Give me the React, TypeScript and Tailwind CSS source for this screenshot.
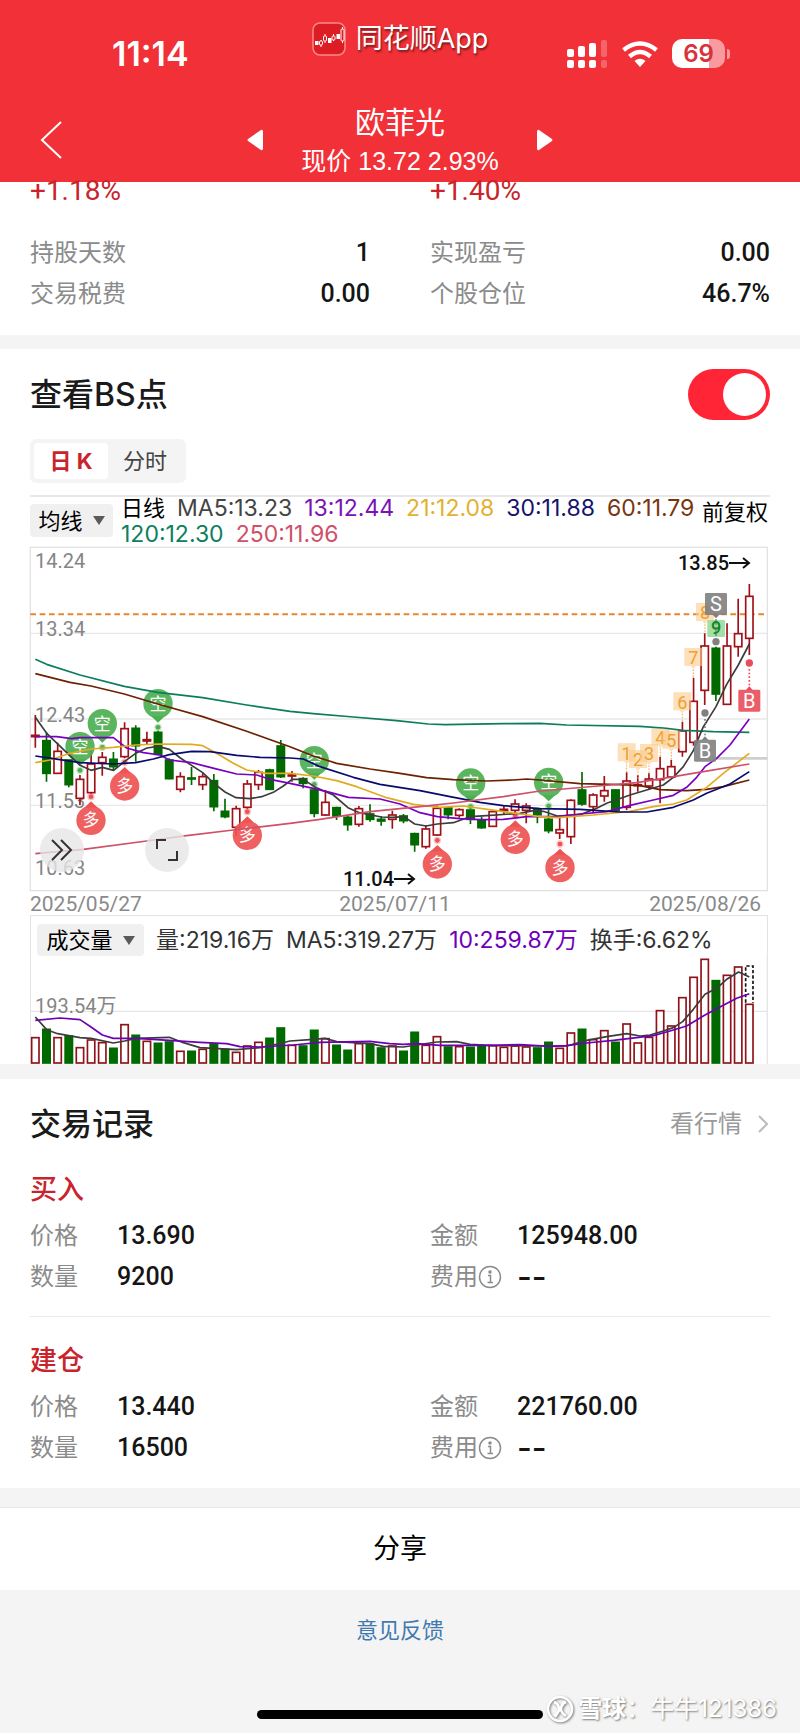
import { useState } from "react";
import clsx from "clsx";

type Candle = [up: 0 | 1, high: number, top: number, bottom: number, low: number, volumeTop: number];
type Point = [x: number, y: number];

// Chart geometry lives on a 3x grid and is scaled down when drawn.
const STEP = 33.47;
const candleX = (i: number) => 46 + STEP * i;

const RED = "#a01018";
const GREEN = "#006a00";

const CANDLES: Candle[] = [
  [1, 525, 586, 590, 623, 409],
  [0, 576, 602, 700, 725, 384],
  [1, 608, 634, 700, 700, 409],
  [0, 660, 660, 734, 742, 404],
  [1, 705, 718, 775, 795, 439],
  [1, 632, 672, 758, 762, 416],
  [1, 636, 652, 668, 707, 424],
  [0, 636, 658, 680, 690, 441],
  [1, 547, 566, 650, 655, 370],
  [0, 556, 565, 617, 665, 402],
  [1, 575, 599, 603, 612, 420],
  [0, 572, 577, 643, 646, 426],
  [0, 655, 660, 716, 718, 422],
  [1, 697, 710, 748, 757, 450],
  [0, 681, 714, 717, 735, 450],
  [1, 700, 710, 734, 750, 444],
  [0, 702, 722, 800, 814, 428],
  [0, 776, 814, 830, 835, 444],
  [1, 797, 806, 862, 888, 453],
  [1, 720, 732, 802, 806, 434],
  [1, 690, 697, 734, 750, 423],
  [0, 686, 690, 748, 750, 411],
  [0, 600, 618, 710, 714, 380],
  [1, 693, 705, 708, 725, 432],
  [0, 712, 716, 730, 745, 434],
  [0, 745, 750, 820, 832, 387],
  [1, 750, 787, 825, 828, 412],
  [0, 800, 803, 828, 840, 432],
  [0, 828, 832, 854, 872, 447],
  [1, 798, 806, 853, 860, 427],
  [0, 793, 822, 838, 845, 428],
  [0, 828, 838, 843, 857, 440],
  [1, 812, 825, 838, 866, 434],
  [0, 822, 828, 842, 850, 450],
  [0, 878, 881, 914, 935, 393],
  [1, 855, 867, 920, 926, 432],
  [1, 797, 805, 885, 888, 406],
  [0, 800, 804, 824, 838, 437],
  [1, 805, 809, 826, 833, 436],
  [0, 805, 810, 838, 852, 438],
  [0, 830, 842, 863, 866, 434],
  [1, 810, 815, 859, 861, 433],
  [1, 795, 808, 812, 825, 438],
  [1, 778, 792, 811, 818, 434],
  [1, 790, 798, 811, 850, 437],
  [0, 803, 808, 824, 850, 440],
  [0, 810, 838, 872, 880, 423],
  [1, 832, 869, 879, 897, 441],
  [1, 778, 781, 890, 912, 395],
  [0, 696, 750, 792, 797, 384],
  [1, 760, 765, 800, 820, 415],
  [1, 708, 752, 768, 785, 388],
  [0, 748, 750, 811, 815, 423],
  [1, 697, 723, 802, 810, 368],
  [1, 705, 734, 737, 755, 425],
  [1, 700, 717, 738, 748, 408],
  [1, 650, 686, 719, 790, 328],
  [1, 660, 680, 711, 713, 374],
  [1, 545, 573, 635, 650, 289],
  [1, 413, 484, 607, 617, 228],
  [1, 280, 318, 451, 495, 174],
  [0, 320, 325, 462, 483, 238],
  [1, 250, 318, 493, 495, 222],
  [1, 176, 281, 320, 350, 197],
  [1, 132, 169, 295, 345, 309],
];

const AVERAGES = [
  {
    color: "#0b7d5e",
    points:
      "46,358 80,373 180,405 313,439 413,457 548,473 680,495 810,514 880,521 1000,531 1130,542 1225,552 1275,554 1450,551 1560,550 1640,555 1860,559 1930,564 1990,571 2080,575 2188,577",
  },
  {
    color: "#6e2000",
    points:
      "46,401 150,427 213,438 313,462 413,492 548,530 680,574 810,620 880,648 950,670 1050,687 1140,700 1220,713 1300,719 1400,723 1480,720 1520,717 1560,720 1680,731 1800,734 1860,737 1920,749 2000,752 2060,748 2110,740 2188,720",
  },
  {
    color: "#3c3c3c",
    points:
      "46,532 80,580 130,628 180,676 213,691 247,682 281,691 313,665 347,640 381,624 414,619 448,628 481,654 548,698 582,730 615,756 648,773 690,776 725,770 760,757 790,738 816,718 850,718 883,740 917,755 940,765 984,803 1018,818 1084,831 1118,832 1152,830 1184,852 1218,858 1252,852 1300,848 1350,830 1400,827 1500,820 1540,812 1570,814 1612,828 1680,824 1730,805 1760,790 1830,765 1890,747 1930,735 1960,712 1990,680 2020,632 2050,560 2060,545 2088,500 2120,433 2155,375 2188,312",
  },
  {
    color: "#7a00c0",
    points:
      "46,590 110,590 155,596 180,593 280,593 320,624 370,638 420,645 448,660 515,668 582,685 650,702 710,705 750,718 810,730 880,745 930,757 985,772 1080,777 1140,792 1200,818 1252,830 1320,836 1380,839 1450,838 1520,830 1612,830 1680,822 1760,815 1830,796 1900,780 1960,766 2000,742 2030,712 2055,680 2090,655 2130,615 2188,537",
  },
  {
    color: "#e2ab1f",
    points:
      "46,668 90,660 150,640 213,627 280,622 347,615 414,612 515,613 548,617 590,640 640,670 680,690 740,700 810,700 880,708 950,722 1010,740 1100,773 1180,793 1260,802 1330,798 1430,812 1500,822 1560,830 1612,833 1720,825 1830,814 1900,800 1960,792 2000,780 2060,742 2110,700 2188,640",
  },
  {
    color: "#0a0a6e",
    points:
      "46,648 100,656 180,668 280,672 347,668 400,657 448,644 515,634 570,635 650,646 720,652 810,654 850,657 900,680 1000,712 1080,733 1200,752 1290,770 1380,787 1450,797 1560,806 1680,808 1800,816 1880,816 1960,802 2020,780 2060,760 2130,732 2188,695",
  },
  {
    color: "#cf5069",
    points:
      "46,941 190,928 380,903 500,887 640,870 810,850 900,838 1050,815 1200,800 1300,789 1450,770 1560,753 1700,741 1850,728 1930,715 2050,695 2188,672",
  },
];

const VOLUME_AVERAGES = [
  {
    color: "#3c3c3c",
    points:
      "46,348 80,386 113,398 180,410 213,412 280,426 314,420 347,412 448,409 490,425 540,440 650,446 720,440 760,432 810,420 880,415 915,412 950,422 1050,428 1090,436 1150,438 1190,432 1250,423 1310,422 1350,430 1420,434 1600,435 1640,435 1700,418 1760,407 1820,398 1860,405 1890,402 1930,390 1960,380 1988,362 2020,325 2055,280 2090,262 2120,235 2156,213 2188,228",
  },
  {
    color: "#6e00b4",
    points:
      "46,358 120,351 180,356 213,378 247,402 280,412 347,412 448,418 540,424 620,428 660,437 720,438 820,432 900,424 1050,421 1110,428 1150,430 1190,428 1260,433 1400,433 1500,431 1590,436 1640,434 1700,426 1780,418 1850,410 1900,404 1950,390 2000,375 2055,342 2100,318 2150,292 2188,278",
  },
];

const SHORT_PINS: Point[] = [[180, 620], [247, 551], [414, 491], [883, 662], [1352, 729], [1586, 727]];
const LONG_PINS: Point[] = [[213, 841], [314, 738], [682, 886], [1252, 972], [1486, 898], [1620, 983]];

const COUNT_TAGS: Point[] = [
  [1820, 638], [1854, 658], [1887, 640], [1921, 590], [1954, 600], [1987, 485], [2020, 352], [2055, 217],
];

const PRICE_LABELS = [
  { text: "14.24", y: 21 },
  { text: "13.34", y: 89 },
  { text: "12.43", y: 175 },
  { text: "11.53", y: 261 },
  { text: "10.63", y: 328 },
];

const SCALE = "translate(-10 -7) scale(0.33333)";
const toX = (x: number) => x / 3 - 10;
const toY = (y: number) => y / 3 - 7;

const TrendPin = ({ at: [x, y], kind }: { at: Point; kind: "空" | "多" }) => {
  const down = kind === "空" ? 1 : -1;
  const color = kind === "空" ? "#4caf50" : "#ee5253";
  return (
    <g>
      <g transform={SCALE} fill={color}>
        <circle cx={x} cy={y} r={44} opacity={0.92} />
        <path d={`M${x - 20} ${y + 38 * down}L${x} ${y + 57 * down}L${x + 20} ${y + 38 * down}Z`} />
        <circle cx={x} cy={y + 71 * down} r={11} opacity={0.35} />
        <circle cx={x} cy={y + 71 * down} r={7} />
      </g>
      <text x={toX(x)} y={toY(y) + 6} textAnchor="middle" fontSize={17} fill="#fff">
        {kind}
      </text>
    </g>
  );
};

const TradeFlag = ({ at: [x, y], label, color, down }: { at: Point; label: string; color: string; down?: boolean }) => {
  const dir = down ? 1 : -1;
  return (
    <g>
      <g transform={SCALE} fill={color}>
        <rect x={x - 33} y={y - 33} width={66} height={66} rx={4} opacity={0.9} />
        <path d={`M${x - 10} ${y + 32 * dir}L${x} ${y + 43 * dir}L${x + 10} ${y + 32 * dir}Z`} />
        <circle cx={x} cy={y + 113 * dir} r={11} />
        <path
          d={`M${x} ${y + 46 * dir}V${y + 100 * dir}`}
          stroke={color}
          strokeWidth={5}
          strokeDasharray="5 6"
        />
      </g>
      <text x={toX(x)} y={toY(y) + 7} textAnchor="middle" fontSize={20} fill="#fff">
        {label}
      </text>
    </g>
  );
};

const PriceChart = () => (
  <svg
    viewBox="0 0 740 368"
    className="block w-full overflow-visible font-[Roboto,'Noto_Sans_CJK_SC',sans-serif]"
    role="img"
    aria-label="日K线图"
  >
    <g transform={SCALE} fill="none">
      <rect x={31} y={22} width={2211} height={1030} stroke="#e2e2e2" strokeWidth={4} />
      <path d="M31 280H2242M31 537H2242M31 796H2242" stroke="#e8e8e8" strokeWidth={4} />
      <path d="M31 223H2242" stroke="#e8862e" strokeWidth={6} strokeDasharray="17 11" />
      <path d="M2088 655H2242" stroke="#cfcfcf" strokeWidth={8} />
    </g>

    {PRICE_LABELS.map((label) => (
      <text key={label.text} x={5} y={label.y} fontSize={20} fill="#858585">
        {label.text}
      </text>
    ))}

    <g transform={SCALE}>
      {CANDLES.map(([up, high, top, bottom, low], i) => {
        const x = candleX(i);
        const color = up ? RED : GREEN;
        return (
          <g key={i} stroke={color} strokeWidth={5}>
            <path d={`M${x} ${high}V${top}M${x} ${bottom}V${low}`} />
            <rect
              x={x - 11}
              y={top}
              width={22}
              height={bottom - top}
              fill={up ? "#fff" : color}
            />
          </g>
        );
      })}
    </g>

    {COUNT_TAGS.map(([x, y], i) => (
      <g key={i}>
        <g transform={SCALE}>
          <path
            d={`M${x - 27} ${y - 28}h54v54h-19l-8 9l-8 -9h-19Z`}
            fill="#fbc98a"
            opacity={0.6}
          />
          <path d={`M${x} ${y + 36}V${y + 62}`} stroke="#f0a848" strokeWidth={3} strokeDasharray="5 4" />
        </g>
        <text x={toX(x)} y={toY(y) + 7} textAnchor="middle" fontSize={18} fill="#efa02f">
          {i + 1}
        </text>
      </g>
    ))}
    <g transform={SCALE}>
      <rect x={2062} y={240} width={53} height={51} rx={3} fill="#9bdc9f" opacity={0.9} />
    </g>
    <text x={toX(2088)} y={toY(265) + 6} textAnchor="middle" fontSize={18} fontWeight={500} fill="#0b8a1c">
      9
    </text>

    {SHORT_PINS.map((at) => (
      <TrendPin key={at.join()} at={at} kind="空" />
    ))}
    {LONG_PINS.map((at) => (
      <TrendPin key={at.join()} at={at} kind="多" />
    ))}

    <g transform={SCALE} fill="none" strokeWidth={5} strokeLinejoin="round">
      {AVERAGES.map((line) => (
        <polyline key={line.color} points={line.points} stroke={line.color} />
      ))}
    </g>

    <TradeFlag at={[2088, 192]} label="S" color="#808080" down />
    <TradeFlag at={[2055, 632]} label="B" color="#808080" />
    <TradeFlag at={[2188, 482]} label="B" color="#e94b59" />

    <g fontSize={20} fontWeight={500} fill="#111">
      <text x={648} y={23}>13.85</text>
      <text x={313} y={339}>11.04</text>
    </g>
    <path
      d="M699 16h20m-6 -5l6 5l-6 5M364 332h20m-6 -5l6 5l-6 5"
      fill="none"
      stroke="#111"
      strokeWidth={2}
    />

    <g fontSize={21} fill="#8a8a8a">
      <text x={0} y={364}>2025/05/27</text>
      <text x={365} y={364} textAnchor="middle">2025/07/11</text>
      <text x={731} y={364} textAnchor="end">2025/08/26</text>
    </g>
  </svg>
);

const VolumeChart = () => (
  <svg
    viewBox="0 0 740 108"
    className="block w-full font-[Roboto,'Noto_Sans_CJK_SC',sans-serif]"
    role="img"
    aria-label="成交量图"
  >
    <g transform="translate(-10 -55) scale(0.33333)">
      <path d="M31 331H2242M31 160V490M2242 160V490" stroke="#e5e5e5" strokeWidth={4} />
    </g>
    <text x={5} y={57} fontSize={20} fill="#858585">193.54万</text>
    <g transform="translate(-10 -55) scale(0.33333)">
      {CANDLES.map(([up, , , , , top], i) => (
        <rect
          key={i}
          x={candleX(i) - 11}
          y={top + 1}
          width={22}
          height={485 - top}
          fill={up ? "#fff" : GREEN}
          stroke={up ? "#8e1218" : GREEN}
          strokeWidth={5}
        />
      ))}
      <path d="M2177 305V195H2199V305" fill="none" stroke="#111" strokeWidth={5} strokeDasharray="10 6" />
      <g fill="none" strokeWidth={5} strokeLinejoin="round">
        {VOLUME_AVERAGES.map((line) => (
          <polyline key={line.color} points={line.points} stroke={line.color} />
        ))}
      </g>
    </g>
  </svg>
);

const StatusBar = () => (
  <div className="grid grid-cols-[1fr_auto_1fr] items-start px-[70px] pt-[22px]">
    <time className="mt-3 ml-[42px] text-[34px] leading-10 font-semibold">11:14</time>
    <div className="flex items-center gap-2.5">
      <svg viewBox="0 0 34 34" className="size-[34px]" aria-hidden="true">
        <rect x="1" y="1" width="32" height="32" rx="7" fill="#dc1d24" stroke="#f7898c" strokeWidth="1.5" />
        <g stroke="#fff" strokeWidth="1" fill="#dc1d24">
          <path d="M9 18v7M13 12v9M21.500 12v7M30.500 5v16" />
          <rect x="7.500" y="19" width="3" height="4" rx="1" />
          <rect x="11.500" y="14" width="3" height="5" rx="1" />
          <rect x="20" y="14" width="3" height="4" rx="1" />
          <rect x="29" y="7" width="3" height="12" rx="1" />
        </g>
        <path d="M3 19h3.500v4H3zM16 16h3.500v5H16zM24.500 12H28v5h-3.500z" fill="#fff" />
      </svg>
      <span className="text-[27px] leading-[34px] [text-shadow:1px_2px_2px_rgba(0,0,0,0.5)]">同花顺App</span>
    </div>
    <div className="mt-[17px] flex items-center gap-3.5 justify-self-end">
      <svg viewBox="0 0 41 28" className="h-7 w-[41px]" fill="#fff" aria-label="信号">
        <rect x="0" y="9" width="7" height="8" rx="2" />
        <rect x="11" y="6" width="7" height="11" rx="2" />
        <rect x="22" y="3" width="7" height="14" rx="2" />
        <rect x="34" y="0" width="6" height="17" rx="2" opacity="0.25" />
        <rect x="0" y="20" width="7" height="8" rx="2" />
        <rect x="11" y="20" width="7" height="8" rx="2" />
        <rect x="22" y="20" width="7" height="8" rx="2" />
        <rect x="34" y="20" width="6" height="8" rx="2" opacity="0.25" />
      </svg>
      <svg viewBox="0 0 36 26" className="h-[26px] w-9" fill="none" stroke="#fff" strokeWidth="4.5" aria-label="无线网络">
        <path d="M1.500 9Q18 -4 34.500 9" />
        <path d="M7.500 15.500Q18 6.500 28.500 15.500" />
        <path d="M18 26l-5.500 -6q5.500 -4.500 11 0z" fill="#fff" stroke="none" />
      </svg>
      <div className="flex items-center gap-0.5">
        <div className="h-[29px] w-[53px] rounded-[10px] bg-[linear-gradient(90deg,#fff_69%,#f99a9e_69%)] text-center text-[24px] leading-[29px] font-semibold text-[#d8323a]">
          69
        </div>
        <div className="h-2.5 w-[3px] rounded-r-full bg-[#f99a9e]" />
      </div>
    </div>
  </div>
);

const NavBar = () => (
  <div className="mt-[26px] grid grid-cols-[1fr_auto_1fr] items-center px-10 pb-1">
    <button type="button" aria-label="返回" className="justify-self-start pt-0.5">
      <svg viewBox="0 0 22 38" className="h-[38px] w-[22px]" fill="none" stroke="#fff" strokeWidth="2">
        <path d="M21 1L2 19L21 37" />
      </svg>
    </button>
    <div className="flex items-center gap-[38px]">
      <button type="button" aria-label="上一只" className="pt-0.5">
        <svg viewBox="0 0 16 22" className="h-[22px] w-4" fill="#fff">
          <path d="M14 1Q16 0 16 3V19Q16 22 14 21L1 12Q0 11 1 10Z" />
        </svg>
      </button>
      <div className="text-center">
        <h1 className="text-[30px] leading-[44px]">欧菲光</h1>
        <p className="text-[25px] leading-[34px]">
          现价 <span className="font-['Liberation_Sans',sans-serif]">13.72 2.93%</span>
        </p>
      </div>
      <button type="button" aria-label="下一只" className="pt-0.5">
        <svg viewBox="0 0 16 22" className="h-[22px] w-4" fill="#fff">
          <path d="M2 1Q0 0 0 3V19Q0 22 2 21L15 12Q16 11 15 10Z" />
        </svg>
      </button>
    </div>
  </div>
);

const Stat = ({ label, value }: { label: string; value: string }) => (
  <div className="flex justify-between">
    <dt className="text-[24px] text-[#8b8b8b]">{label}</dt>
    <dd className="font-[Roboto,sans-serif] text-[25px] font-medium text-[#151515]">{value}</dd>
  </div>
);

const InfoIcon = () => (
  <svg viewBox="0 0 24 24" className="size-6" fill="none" stroke="#8b8b8b" strokeWidth="1.5" aria-hidden="true">
    <circle cx="12" cy="12" r="10.500" />
    <circle cx="12" cy="7" r="1" fill="#8b8b8b" />
    <path d="M10 10.500h2.500v7M9.500 17.500h5.500" />
  </svg>
);

const Field = ({ label, value, info }: { label: string; value: string; info?: boolean }) => (
  <div className="flex items-center">
    <dt className="flex w-[87px] shrink-0 items-center text-[24px] text-[#8b8b8b]">
      {label}
      {info && <InfoIcon />}
    </dt>
    <dd
      className={clsx(
        "font-medium text-[#151515]",
        info ? "font-[Inter,sans-serif] text-[32px]" : "font-[Roboto,sans-serif] text-[25px]"
      )}
    >
      {value}
    </dd>
  </div>
);

const TradeRecord = ({ title, price, amount, count }: { title: string; price: string; amount: string; count: string }) => (
  <article>
    <h3 className="text-[27px] leading-10 font-medium text-[#c9242b]">{title}</h3>
    <dl className="mt-[5px] grid grid-cols-[400px_1fr] leading-[41px]">
      <Field label="价格" value={price} />
      <Field label="金额" value={amount} />
      <Field label="数量" value={count} />
      <Field label="费用" value="--" info />
    </dl>
  </article>
);

const Caret = () => (
  <svg viewBox="0 0 12 9" className="h-[9px] w-3" aria-hidden="true">
    <path d="M0 0H12L6 9Z" fill="#5a5a5a" />
  </svg>
);

export default function App() {
  const [showPoints, setShowPoints] = useState(true);
  const [tab, setTab] = useState<"day" | "minute">("day");

  return (
    <div className="w-full bg-[#f4f4f4] font-[Inter,'Noto_Sans_CJK_SC',sans-serif] text-[#1a1a1a]">
      <header className="bg-[#f13037] text-white">
        <StatusBar />
        <NavBar />
      </header>

      <section className="bg-white px-[30px] pb-5">
        <div className="grid grid-cols-2 gap-x-[60px] font-[Roboto,sans-serif] text-[28px] leading-[18px] text-[#c9242b]">
          <span>+1.18%</span>
          <span>+1.40%</span>
        </div>
        <dl className="mt-8 grid grid-cols-2 gap-x-[60px] pb-px leading-[41px]">
          <Stat label="持股天数" value="1" />
          <Stat label="实现盈亏" value="0.00" />
          <Stat label="交易税费" value="0.00" />
          <Stat label="个股仓位" value="46.7%" />
        </dl>
      </section>

      <section className="mt-[14px] bg-white px-[30px] pt-5">
        <div className="flex items-center justify-between">
          <h2 className="text-[32px] leading-10 font-medium">查看BS点</h2>
          <button
            type="button"
            role="switch"
            aria-checked={showPoints}
            aria-label="查看BS点"
            onClick={() => setShowPoints(!showPoints)}
            className={clsx(
              "flex h-[51px] w-[82px] items-center rounded-full px-1",
              showPoints ? "justify-end bg-[#ff2436]" : "justify-start bg-gray-300"
            )}
          >
            <span className="size-[43px] rounded-full bg-white" />
          </button>
        </div>

        <div className="mt-[19px] inline-flex rounded-md bg-[#f4f4f4] p-1 text-[22px] leading-9" role="tablist">
          <button
            type="button"
            role="tab"
            aria-selected={tab === "day"}
            onClick={() => setTab("day")}
            className={clsx("w-[74px] rounded", tab === "day" ? "bg-white font-bold text-[#c9242b]" : "text-[#444]")}
          >
            日 K
          </button>
          <button
            type="button"
            role="tab"
            aria-selected={tab === "minute"}
            onClick={() => setTab("minute")}
            className={clsx("w-[74px] rounded", tab === "minute" ? "bg-white font-bold text-[#c9242b]" : "text-[#444]")}
          >
            分时
          </button>
        </div>

        <div className="mt-3 flex items-start border-t-2 border-[#e8e8e8] text-[22px] leading-[22px]">
          <button type="button" className="mt-[7px] mr-2 flex h-[33px] w-[83px] shrink-0 items-center justify-center gap-2.5 rounded-sm bg-[#f0f0f0] text-black">
            均线
            <Caret />
          </button>
          <div className="flex flex-1 flex-wrap gap-x-3 gap-y-1 pb-0.5 text-[23px] leading-[22px] whitespace-nowrap">
            <span className="text-[22px] leading-[22px] text-black">日线</span>
            <span className="text-[#444]">MA5:13.23</span>
            <span className="text-[#7a12b8]">13:12.44</span>
            <span className="text-[#e2b12f]">21:12.08</span>
            <span className="text-[#14146e]">30:11.88</span>
            <span className="text-[#7a3510]">60:11.79</span>
            <span className="text-[#0b8060]">120:12.30</span>
            <span className="text-[#cf5069]">250:11.96</span>
          </div>
          <span className="mt-1 mr-0.5 shrink-0 text-black">前复权</span>
        </div>

        <div className="relative">
          <PriceChart />
          <button type="button" aria-label="展开" className="absolute top-[281px] left-2.5 flex size-11 items-center justify-center rounded-full bg-[#e6e6e6]/80">
            <svg viewBox="0 0 22 22" className="size-[22px]" fill="none" stroke="#333" strokeWidth="2">
              <path d="M1 1L11 11L1 21M10 1L20 11L10 21" />
            </svg>
          </button>
          <button type="button" aria-label="全屏" className="absolute top-[281px] left-[115px] flex size-11 items-center justify-center rounded-full bg-[#e6e6e6]/80">
            <svg viewBox="0 0 22 22" className="size-[22px]" fill="none" stroke="#333" strokeWidth="2">
              <path d="M1 10V1H10M21 12V21H12" />
            </svg>
          </button>
        </div>

        <div className="mr-0.5 border-x border-t border-[#e2e2e2]">
          <div className="flex items-center gap-x-3 pt-2 pl-1.5 text-[23px] leading-8 whitespace-nowrap text-[#333]">
            <button type="button" className="flex h-8 w-[107px] items-center justify-center gap-2.5 rounded-sm bg-[#f0f0f0] text-[22px] text-black">
              成交量
              <Caret />
            </button>
            <span>量:219.16万</span>
            <span>MA5:319.27万</span>
            <span className="text-[#7000b8]">10:259.87万</span>
            <span>换手:6.62%</span>
          </div>
        </div>
        <VolumeChart />
      </section>

      <section className="mt-[15px] bg-white px-[30px] pt-[25px] pb-5">
        <div className="flex items-center justify-between">
          <h2 className="text-[31px] leading-10 font-medium">交易记录</h2>
          <a href="#quote" className="mr-0.5 flex items-center gap-4 text-[24px] leading-10 text-[#9a9a9a]">
            看行情
            <svg viewBox="0 0 10 18" className="h-[18px] w-2.5" fill="none" stroke="#bbb" strokeWidth="2" aria-hidden="true">
              <path d="M1 1L9 9L1 17" />
            </svg>
          </a>
        </div>
        <div className="mt-[26px]">
          <TradeRecord title="买入" price="13.690" amount="125948.00" count="9200" />
        </div>
        <hr className="mt-[19px] mb-6 border-[#ebebeb]" />
        <TradeRecord title="建仓" price="13.440" amount="221760.00" count="16500" />
      </section>

      <button type="button" className="mt-[19px] block w-full border-t border-[#e8e8e8] bg-white py-[21px] text-[27px] leading-10 text-black">
        分享
      </button>

      <footer className="relative flex flex-col items-center pt-6 pb-[14px]">
        <a href="#feedback" className="text-[22px] leading-8 text-[#4079b0]">
          意见反馈
        </a>
        <div className="mt-16 h-[9px] w-[286px] rounded-full bg-black" />
        <div className="absolute right-[23px] bottom-2 flex items-center gap-1 text-[24px] leading-8 text-white [text-shadow:1px_1px_2px_rgba(0,0,0,0.5)]">
          <svg viewBox="0 0 28 28" className="size-7 drop-shadow-[1px_1px_1px_rgba(0,0,0,0.5)]" fill="none" stroke="#fff" aria-hidden="true">
            <circle cx="14" cy="14" r="12" strokeWidth="2.5" />
            <path d="M8 7Q13 9 13 14Q13 18 8 21M20 7Q15 9 15 14Q15 18 20 21M19 6L9 22" strokeWidth="2.5" />
          </svg>
          <span>
            <b className="font-bold">雪球</b>：牛牛121386
          </span>
        </div>
      </footer>
    </div>
  );
}
